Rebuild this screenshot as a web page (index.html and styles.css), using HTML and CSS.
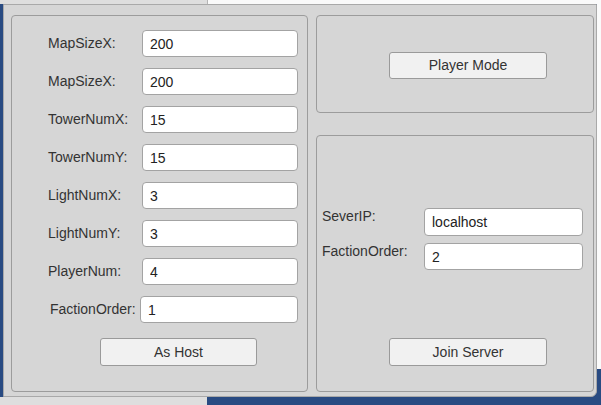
FILE: index.html
```html
<!DOCTYPE html>
<html>
	<head>
		<meta charset="UTF-8">
		<title>Game Setup</title>
		<link rel="stylesheet" href="styles.css">
	</head>
	<body>
		<div class="screen">
			<div class="topbar">
				<div class="tab"></div>
				<div class="blank"></div>
			</div>
			<div class="middle">
				<div class="edge"></div>
				<div class="window">
					<div class="box host">
						<div class="row"><label>MapSizeX:</label><input type="text" value="200" readonly></div>
						<div class="row"><label>MapSizeX:</label><input type="text" value="200" readonly></div>
						<div class="row"><label>TowerNumX:</label><input type="text" value="15" readonly></div>
						<div class="row"><label>TowerNumY:</label><input type="text" value="15" readonly></div>
						<div class="row"><label>LightNumX:</label><input type="text" value="3" readonly></div>
						<div class="row"><label>LightNumY:</label><input type="text" value="3" readonly></div>
						<div class="row"><label>PlayerNum:</label><input type="text" value="4" readonly></div>
						<div class="row"><label class="wide">FactionOrder:</label><input type="text" value="1" readonly></div>
						<button class="btn host-btn">As Host</button>
					</div>
					<div class="side">
						<div class="box mode">
							<button class="btn">Player Mode</button>
						</div>
						<div class="box join">
							<div class="jrow"><label>SeverIP:</label><input type="text" value="localhost" readonly></div>
							<div class="jrow"><label>FactionOrder:</label><input type="text" value="2" readonly></div>
							<button class="btn join-btn">Join Server</button>
						</div>
					</div>
				</div>
				<div class="rightedge"></div>
			</div>
			<div class="bottombar">
				<div class="tab"></div>
			</div>
		</div>
	</body>
</html>
```

FILE: styles.css
```css
body{
	margin: 0;
	font-family: "Liberation Sans", Arial, sans-serif;
	font-size: 14px;
	color: #333;
}
.screen{
	width: 601px;
	height: 405px;
	background-color: #294b82;
	display: flex;
	flex-direction: column;
	overflow: hidden;
}
.topbar{
	display: flex;
	height: 4px;
}
.topbar .tab{
	width: 207px;
	background-color: #dedede;
	border-right: 1px solid #b5b5b5;
}
.topbar .blank{
	flex: 1;
	background-color: #fafafa;
}
.middle{
	display: flex;
	height: 393px;
}
.edge{
	width: 3px;
}
.rightedge{
	width: 4px;
	background: linear-gradient(#fafafa 93%, #294b82 93%);
}
.window{
	background-color: #d6d6d6;
	border: 1px solid #a9a9a9;
	border-radius: 0 0 6px 0;
	padding: 10px 2px 4px 7px;
	box-sizing: border-box;
	width: 594px;
	height: 393px;
	display: flex;
	gap: 8px;
}
.box{
	border: 1px solid #9c9c9c;
	border-radius: 4px;
	box-sizing: border-box;
}
.host{
	width: 297px;
	flex-shrink: 0;
	padding: 14px 9px 0 36px;
	display: flex;
	flex-direction: column;
	align-items: flex-start;
	gap: 11px;
}
.row{
	display: flex;
	align-items: flex-start;
	height: 27px;
	width: 250px;
}
label{
	line-height: 16px;
}
.row label{
	width: 94px;
	padding-top: 5px;
	flex-shrink: 0;
}
.row label.wide{
	width: 90px;
	margin-left: 2px;
}
input{
	font-family: "Liberation Sans", Arial, sans-serif;
	font-size: 14px;
	color: #222;
	background-color: #fff;
	border: 1px solid #a3a3a3;
	border-radius: 4px;
	padding: 0 7px;
	box-sizing: border-box;
	outline: none;
	margin: 0;
	min-width: 0;
	width: 0;
}
.row input{
	flex: 1;
	height: 27px;
}
.btn{
	font-family: "Liberation Sans", Arial, sans-serif;
	font-size: 14px;
	color: #333;
	background-color: #f1f1f1;
	border: 1px solid #9a9a9a;
	border-radius: 3px;
	width: 158px;
	height: 28px;
	padding: 0;
	margin: 0;
}
.host-btn{
	margin-top: 4px;
	margin-left: 52px;
	width: 157px;
}
.side{
	flex: 1;
	min-width: 0;
	display: flex;
	flex-direction: column;
	gap: 22px;
}
.mode{
	height: 98px;
	display: flex;
	align-items: center;
	padding-left: 72px;
}
.mode .btn{
	height: 27px;
	margin-top: 2px;
}
.join{
	flex: 1;
	display: flex;
	flex-direction: column;
	align-items: flex-start;
	padding: 72px 10px 25px 5px;
	gap: 7px;
}
.jrow{
	display: flex;
	align-items: flex-start;
	align-self: stretch;
}
.jrow label{
	width: 102px;
	flex-shrink: 0;
}
.jrow input{
	flex: 1;
	height: 28px;
}
.jrow + .jrow input{
	height: 27px;
}
.join-btn{
	margin-top: auto;
	margin-left: 67px;
}
.bottombar{
	flex: 1;
	display: flex;
}
.bottombar .tab{
	width: 207px;
	background-color: #dedede;
}
```
